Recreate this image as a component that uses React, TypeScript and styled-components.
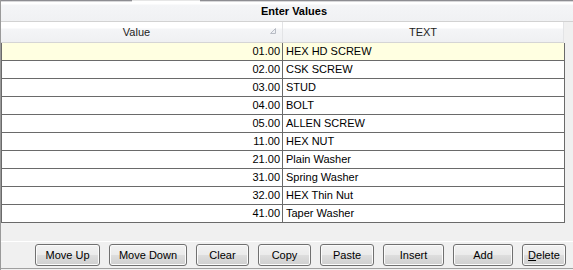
import React from "react";
import styled, { createGlobalStyle } from "styled-components";

const Global = createGlobalStyle`
  html, body { margin: 0; padding: 0; background: #f0f0f0; }
  body { font-family: "Liberation Sans", Arial, sans-serif; font-size: 11px; color: #000; }
`;

const Panel = styled.div`
  width: 573px;
  height: 270px;
  background: #f0f0f0;
  display: flex;
  flex-direction: column;
  box-sizing: border-box;
  border-left: 1px solid #9a9a9a;
  overflow: hidden;
`;

const TabStrip = styled.div`
  height: 2px;
  display: flex;
  margin-left: -1px;
`;

const TabSeg = styled.div<{ $w?: number; $active?: boolean }>`
  ${(p) => (p.$w ? `width: ${p.$w}px;` : "flex: 1;")}
  border-top: 1px solid ${(p) => (p.$active ? "#e6e6e6" : "#8d8d92")};
  background: ${(p) => (p.$active ? "#ffffff" : "#d8d8da")};
`;

const TitleBar = styled.div`
  height: 19px;
  border-bottom: 1px solid #d2d2d2;
  background: linear-gradient(#ffffff 0px, #ffffff 2px, #f4f5f7 3px, #f0f1f3 100%);
  font-weight: bold;
  line-height: 19px;
  text-align: center;
  padding-left: 14px;
`;

const Grid = styled.div`
  width: 564px;
  display: flex;
  flex-direction: column;
`;

const HeaderRow = styled.div`
  display: flex;
  height: 20px;
  width: 563px;
  border-bottom: 1px solid #d5d5d5;
  background: linear-gradient(#ffffff 0px, #ffffff 6px, #f4f5f7 7px, #eff0f2 100%);
`;

const HeaderCell = styled.div<{ $w?: number; $sorted?: boolean }>`
  ${(p) => (p.$w ? `width: ${p.$w}px;` : "flex: 1;")}
  position: relative;
  box-sizing: border-box;
  border-right: 1px solid #e3e4e6;
  line-height: 20px;
  text-align: center;
  color: #1e1e1e;
  padding-right: ${(p) => (p.$sorted ? "10px" : "0")};
`;

const SortMark = styled.svg`
  position: absolute;
  right: 5px;
  top: 6px;
`;

const Body = styled.div`
  border-left: 1px solid #6a6a6a;
  border-right: 1px solid #6a6a6a;
`;

const Row = styled.div<{ $current?: boolean }>`
  display: flex;
  height: 17px;
  border-bottom: 1px solid #6a6a6a;
  background: ${(p) => (p.$current ? "#ffffe1" : "#ffffff")};
`;

const ValueCell = styled.div`
  width: 281px;
  box-sizing: border-box;
  border-right: 1px solid #6a6a6a;
  text-align: right;
  padding-right: 2px;
  line-height: 17px;
`;

const TextCell = styled.div`
  flex: 1;
  padding-left: 3px;
  line-height: 17px;
`;

const Spacer = styled.div`
  height: 18px;
`;

const ButtonBar = styled.div`
  border-top: 1px solid #ffffff;
  border-bottom: 1px solid #a0a0a0;
  height: 28px;
  box-sizing: border-box;
  display: flex;
  justify-content: flex-end;
  align-items: flex-start;
  padding: 2px 7px 0 0;
  gap: 9px;
`;

const Button = styled.button<{ $w: number }>`
  width: ${(p) => p.$w}px;
  height: 22px;
  box-sizing: border-box;
  border: 1px solid #707070;
  border-radius: 3px;
  background: linear-gradient(#f2f2f2 0%, #ebebeb 48%, #dddddd 52%, #cfcfcf 100%);
  box-shadow: inset 0 0 0 1px #fbfbfb;
  font-family: "Liberation Sans", Arial, sans-serif;
  font-size: 11px;
  color: #000;
  padding: 0;
  line-height: 20px;
`;

const Key = styled.span`
  text-decoration: underline;
`;

const rows: [string, string][] = [
  ["01.00", "HEX HD SCREW"],
  ["02.00", "CSK SCREW"],
  ["03.00", "STUD"],
  ["04.00", "BOLT"],
  ["05.00", "ALLEN SCREW"],
  ["11.00", "HEX NUT"],
  ["21.00", "Plain Washer"],
  ["31.00", "Spring Washer"],
  ["32.00", "HEX Thin Nut"],
  ["41.00", "Taper Washer"],
];

const buttons: { label: React.ReactNode; w: number }[] = [
  { label: "Move Up", w: 65 },
  { label: "Move Down", w: 78 },
  { label: "Clear", w: 53 },
  { label: "Copy", w: 53 },
  { label: "Paste", w: 54 },
  { label: "Insert", w: 61 },
  { label: "Add", w: 60 },
  { label: <><Key>D</Key>elete</>, w: 44 },
];

export default function App() {
  return (
    <>
      <Global />
      <Panel>
        <TabStrip>
          <TabSeg $w={132} />
          <TabSeg $w={68} $active />
          <TabSeg />
        </TabStrip>
        <TitleBar>Enter Values</TitleBar>
        <Grid>
          <HeaderRow>
            <HeaderCell $w={282} $sorted>
              Value
              <SortMark width="7" height="6" viewBox="0 0 7 6">
                <path d="M0.5 5.5 L5.5 0.5 L5.5 5.5 Z" fill="#eef0f4" stroke="#b8bcc4" strokeWidth="1" />
              </SortMark>
            </HeaderCell>
            <HeaderCell>TEXT</HeaderCell>
          </HeaderRow>
          <Body>
            {rows.map(([v, t], i) => (
              <Row key={v} $current={i === 0}>
                <ValueCell>{v}</ValueCell>
                <TextCell>{t}</TextCell>
              </Row>
            ))}
          </Body>
        </Grid>
        <Spacer />
        <ButtonBar>
          {buttons.map((b, i) => (
            <Button key={i} $w={b.w}>
              {b.label}
            </Button>
          ))}
        </ButtonBar>
      </Panel>
    </>
  );
}
